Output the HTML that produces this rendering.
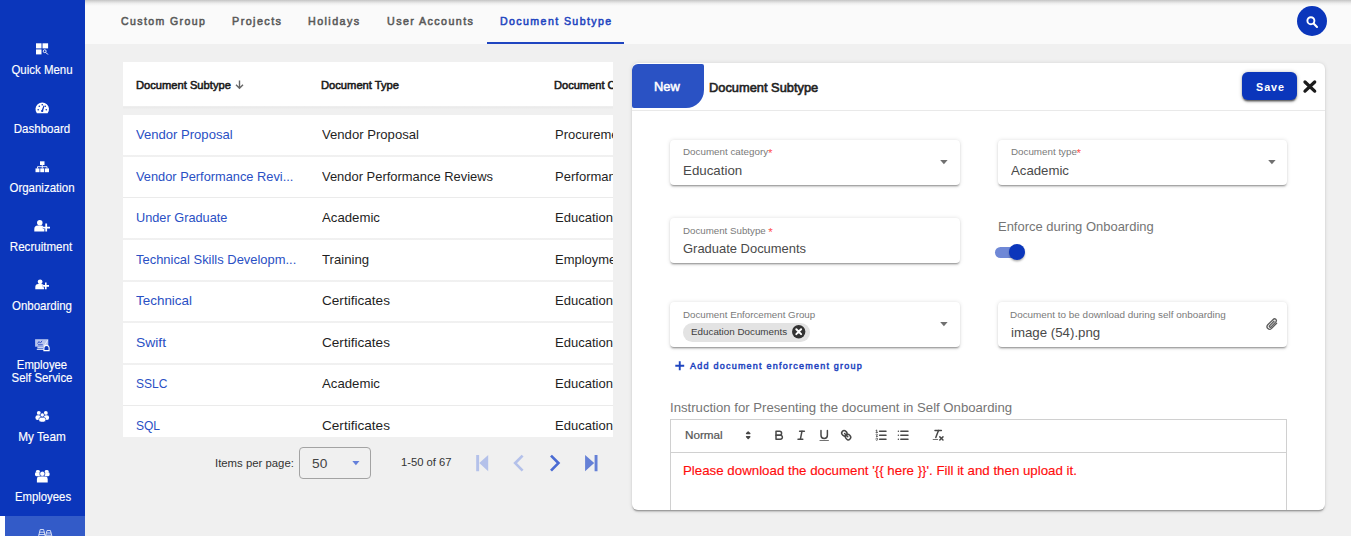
<!DOCTYPE html>
<html lang="en">
<head>
<meta charset="utf-8">
<title>Document Subtype</title>
<style>
*{box-sizing:border-box;margin:0;padding:0}
html,body{width:1351px;height:536px;overflow:hidden;background:#f0f0f0;font-family:"Liberation Sans",sans-serif;color:#222}
.abs{position:absolute}
.t{position:absolute;white-space:nowrap}
#side .t{-webkit-text-stroke:0.15px #fff}
#side{position:absolute;left:0;top:0;width:85px;height:536px;background:#0b36bb;color:#fff;z-index:5;overflow:hidden}
#side svg{position:absolute;overflow:visible}
.qs{fill:none;stroke:#484848;stroke-linecap:round;stroke-linejoin:round;stroke-width:1.850}
.qt{stroke-width:1}
.qf{fill:#444}
#active{position:absolute;left:5px;top:516px;width:80px;height:20px;background:#335bc8}
#activebar{position:absolute;left:0;top:516px;width:5px;height:20px;background:#fff}
#topnav{position:absolute;left:85px;top:0;width:1266px;height:44.4px;background:#fafafa;z-index:3}
#topshadow{position:absolute;left:85px;top:0;width:1266px;height:6px;background:linear-gradient(#c4c4c4,#dcdcdc 30%,#f0f0f0 62%,rgba(250,250,250,0));z-index:4}
#top{position:absolute;left:0;top:0;z-index:4}
#ink{position:absolute;left:486.5px;top:42px;width:137.5px;height:2.4px;background:#1f45c0;z-index:4}
#srch{position:absolute;left:1297px;top:6px;width:30px;height:30px;border-radius:50%;background:#0b36bb;z-index:4}
#tbl{position:absolute;left:123px;top:62.3px;width:490px;height:374.8px;overflow:hidden;background:#fff}
#hdr{position:absolute;left:0;top:0;width:490px;height:43.6px;background:#fff}
#gap{position:absolute;left:0;top:43.6px;width:490px;height:9px;background:linear-gradient(#f0f0f0,#ebebeb 1.2px,#ebebeb 2px,#f0f0f0 3px)}
.sep{position:absolute;left:0;width:490px;height:1.8px;background:linear-gradient(#f6f6f6,#ebebeb 50%,#f6f6f6)}
#pag{position:absolute;left:0;top:0}
#panel{position:absolute;left:632px;top:62.5px;width:693px;height:447.5px;background:#fff;border-radius:6px;box-shadow:0 2.4px .8px -1.6px rgba(0,0,0,.2),0 1.6px 1.6px rgba(0,0,0,.14),0 .8px 4px rgba(0,0,0,.1);overflow:hidden}
#pin{position:absolute;left:0;top:-0.5px;width:693px;height:449px}
#hline{position:absolute;left:0;top:48.3px;width:693px;height:1.2px;background:#e9e9e9}
#new{position:absolute;left:0;top:2px;width:71.5px;height:44px;background:#2a52c4;border-radius:6px 2px 18px 2px}
#save{position:absolute;left:610px;top:10px;width:55px;height:28px;background:#0b36bb;border-radius:6px;box-shadow:0 2.4px .8px -1.6px rgba(0,0,0,.3),0 1.800px 1.800px rgba(0,0,0,.34),0 .8px 4px rgba(0,0,0,.2)}
.fld{position:absolute;height:44.8px;width:290px;background:#fff;border-radius:4px;box-shadow:0 2.4px .8px -1.6px rgba(0,0,0,.2),0 1.6px 1.6px rgba(0,0,0,.14),0 .8px 4px rgba(0,0,0,.12)}

#chip{position:absolute;left:51.2px;top:261.2px;width:126.8px;height:18.5px;border-radius:9.25px;background:#e3e3e3}
#track{position:absolute;left:363px;top:185.4px;width:28px;height:10.8px;border-radius:6px;background:#6f88d6}
#thumb{position:absolute;left:377px;top:182px;width:16.2px;height:16.2px;border-radius:50%;background:#0b36bb;box-shadow:0 1.5px 2px rgba(0,0,0,.3)}
#ed{position:absolute;left:38.1px;top:357.3px;width:616.8px;height:120px;border:1.2px solid #d0d0d0}
#edline{position:absolute;left:38.2px;top:389.9px;width:616.6px;height:1.2px;background:#d0d0d0}
svg{position:absolute;overflow:visible}
.qs{fill:none;stroke:#484848;stroke-linecap:round;stroke-linejoin:round;stroke-width:1.850}
.qt{stroke-width:1}
.qf{fill:#444}
</style>
</head>
<body>
<div id="side">
<div class="t" style="font-size:12.7px;line-height:18px;top:61.00px;color:#fff;left:-58.10px;width:200px;text-align:center;transform:scaleX(0.9032);transform-origin:50% 50%;"><span id="s1">Quick Menu</span></div>
<div class="t" style="font-size:12.7px;line-height:18px;top:120.00px;color:#fff;left:-57.65px;width:200px;text-align:center;transform:scaleX(0.9090);transform-origin:50% 50%;"><span id="s2">Dashboard</span></div>
<div class="t" style="font-size:12.7px;line-height:18px;top:179.00px;color:#fff;left:-58.15px;width:200px;text-align:center;transform:scaleX(0.9041);transform-origin:50% 50%;"><span id="s3">Organization</span></div>
<div class="t" style="font-size:12.7px;line-height:18px;top:238.00px;color:#fff;left:-58.53px;width:200px;text-align:center;transform:scaleX(0.9119);transform-origin:50% 50%;"><span id="s4">Recruitment</span></div>
<div class="t" style="font-size:12.7px;line-height:18px;top:297.00px;color:#fff;left:-57.95px;width:200px;text-align:center;transform:scaleX(0.9049);transform-origin:50% 50%;"><span id="s5">Onboarding</span></div>
<div class="t" style="font-size:12.7px;line-height:18px;top:356.00px;color:#fff;left:-57.60px;width:200px;text-align:center;transform:scaleX(0.8918);transform-origin:50% 50%;"><span id="s6">Employee</span></div>
<div class="t" style="font-size:12.7px;line-height:18px;top:369.00px;color:#fff;left:-58.07px;width:200px;text-align:center;transform:scaleX(0.8996);transform-origin:50% 50%;"><span id="s7">Self Service</span></div>
<div class="t" style="font-size:12.7px;line-height:18px;top:428.00px;color:#fff;left:-57.85px;width:200px;text-align:center;transform:scaleX(0.9270);transform-origin:50% 50%;"><span id="s8">My Team</span></div>
<div class="t" style="font-size:12.7px;line-height:18px;top:488.00px;color:#fff;left:-57.50px;width:200px;text-align:center;transform:scaleX(0.8955);transform-origin:50% 50%;"><span id="s9">Employees</span></div>
<svg style="left:0;top:0" width="85" height="536" viewBox="0 0 85 536" fill="#fff">
<!-- quick menu -->
<rect x="36" y="43.3" width="5.5" height="5.1"/><rect x="42.5" y="43.3" width="5.6" height="5.1"/><rect x="36" y="49.4" width="5.5" height="5"/>
<circle cx="44.7" cy="51.2" r="1.45" fill="none" stroke="#fff" stroke-width="0.9"/><path d="M45.8 52.4 L47.9 54.5" stroke="#fff" stroke-width="1" fill="none"/>
<!-- dashboard -->
<path d="M36.9 113.3 A6.75 6.75 0 1 1 47.6 113.3 Z"/>
<g fill="#0b36bb"><circle cx="38.2" cy="109.8" r="0.8"/><circle cx="39.3" cy="106.3" r="0.8"/><circle cx="42.25" cy="104.8" r="0.8"/><circle cx="45.3" cy="106.3" r="0.8"/><circle cx="46.3" cy="109.8" r="0.8"/><path d="M41.3 111.2 L43.6 105.6 L44.5 106 L42.9 111.6 Z"/><circle cx="42.2" cy="111" r="1.1"/></g>
<!-- organization -->
<rect x="40" y="161.3" width="4.5" height="3.7"/><rect x="35.5" y="168.4" width="4" height="3.8"/><rect x="40.25" y="168.4" width="4" height="3.8"/><rect x="45" y="168.4" width="4" height="3.8"/>
<path d="M42.25 165V168.4 M37.5 168.6V166.7H47V168.6" stroke="#fff" stroke-width="0.9" fill="none"/>
<!-- recruitment user-plus -->
<circle cx="39.8" cy="222.8" r="2.75"/><path d="M34.3 231.4v-2.500a3.500 3.500 0 0 1 3.500-3.500h3.200a3.500 3.500 0 0 1 3.500 3.500v2.500z"/><path d="M46.200 223.600v7.800M42.900 227.600h7.100" stroke="#0b36bb" stroke-width="2.800" fill="none"/><path d="M46.200 223.600v7.800M42.900 227.600h7.100" stroke="#fff" stroke-width="1.800" fill="none"/>
<!-- onboarding user-plus small -->
<circle cx="40.100" cy="281.800" r="2.400"/><path d="M35.300 289.300v-2.200a3 3 0 0 1 3-3h2.900a3 3 0 0 1 3 3v2.200z"/><path d="M45.800 282.500v6.800M42.800 285.900h6.200" stroke="#0b36bb" stroke-width="2.500" fill="none"/><path d="M45.800 282.500v6.800M42.800 285.900h6.200" stroke="#fff" stroke-width="1.600" fill="none"/>
<!-- employee self service -->
<path d="M35.100 339.200h13.200v7.500H35.100z" fill="#b7c4ee"/><path d="M37.400 346.700h6v1.600h-6zM36.800 348.700h7v1.300h-7z" fill="#c9d3f3"/>
<path d="M37.600 343.500l1.400-2 1.400 1.600 1.600-2.300M38 344.800h4.800" stroke="#3050c8" stroke-width="1" fill="none"/>
<path d="M43.900 350.600v-2.600a2.600 2.600 0 0 1 5.200 0v2.600z" fill="#0b36bb" stroke="#fff" stroke-width="1.100"/>
<path d="M44.600 345.200l3-5" stroke="#e6ebfa" stroke-width="1" fill="none"/>
<!-- my team -->
<circle cx="38.800" cy="412.900" r="1.950"/><circle cx="45.800" cy="412.900" r="1.950"/>
<rect x="35.400" y="415.300" width="5.600" height="4.700" rx="2.300"/><rect x="43.600" y="415.300" width="5.500" height="4.700" rx="2.300"/>
<circle cx="42.300" cy="415" r="2.100" stroke="#0b36bb" stroke-width="0.600"/>
<rect x="38.700" y="417.300" width="7.200" height="4.800" rx="2.400" stroke="#0b36bb" stroke-width="0.600"/>
<!-- employees -->
<ellipse cx="37.900" cy="471.400" rx="2" ry="1.300"/><ellipse cx="46.700" cy="471.400" rx="2" ry="1.300"/>
<rect x="35" y="472.300" width="5.400" height="3.900" rx="1.400"/><rect x="44.200" y="472.300" width="5.400" height="3.900" rx="1.400"/>
<circle cx="42.300" cy="473.800" r="2.600" stroke="#0b36bb" stroke-width="0.700"/>
<path d="M36.900 482.400v-3.400a2.400 2.400 0 0 1 2.400-2.400h6a2.400 2.400 0 0 1 2.400 2.400v3.400z"/>
</svg>

<div id="active"></div><div id="activebar"></div>
<svg style="left:0;top:0" width="85" height="536" viewBox="0 0 85 536"><path d="M40.200 529.500h3.400l1.700 7h-6.800zM47 530.500h3.400l1.600 6h-6.600z M39.300 532.200h5.200M38.800 534.600h6.200M46.200 533h5M45.800 535.200h5.800" fill="none" stroke="#e4e9f8" stroke-width="0.900"/></svg>
</div>
<div id="topnav"></div>
<div id="topshadow"></div>
<div id="top">
<div class="t" id="t1" style="font-size:11.4px;line-height:16px;top:13.00px;color:#595959;letter-spacing:1.5px;-webkit-text-stroke:0.55px #595959;left:121.10px;transform:scaleX(0.9247);transform-origin:0 50%;">Custom Group</div>
<div class="t" id="t2" style="font-size:11.4px;line-height:16px;top:13.00px;color:#595959;letter-spacing:1.5px;-webkit-text-stroke:0.55px #595959;left:232.17px;transform:scaleX(0.9492);transform-origin:0 50%;">Projects</div>
<div class="t" id="t3" style="font-size:11.4px;line-height:16px;top:13.00px;color:#595959;letter-spacing:1.5px;-webkit-text-stroke:0.55px #595959;left:308.17px;transform:scaleX(0.9422);transform-origin:0 50%;">Holidays</div>
<div class="t" id="t4" style="font-size:11.4px;line-height:16px;top:13.00px;color:#595959;letter-spacing:1.5px;-webkit-text-stroke:0.55px #595959;left:386.51px;transform:scaleX(0.9393);transform-origin:0 50%;">User Accounts</div>
<div class="t" id="t5" style="font-size:11.4px;line-height:16px;top:13.00px;color:#1f45c0;letter-spacing:1.5px;-webkit-text-stroke:0.55px #1f45c0;left:499.79px;transform:scaleX(0.9317);transform-origin:0 50%;">Document Subtype</div>
</div>
<div id="ink"></div>
<div id="srch"><svg width="30" height="30" viewBox="0 0 30 30"><circle cx="13.900" cy="14.700" r="3.500" fill="none" stroke="#fff" stroke-width="1.900"/><path d="M16.600 17.500 L20 20.900" stroke="#fff" stroke-width="2.100" stroke-linecap="round"/></svg></div>

<div id="tbl">
  <div class="sep" style="top:92.7px"></div>
  <div class="sep" style="top:134.3px"></div>
  <div class="sep" style="top:175.9px"></div>
  <div class="sep" style="top:217.5px"></div>
  <div class="sep" style="top:259.1px"></div>
  <div class="sep" style="top:300.7px"></div>
  <div class="sep" style="top:342.3px"></div>
  <div id="hdr"></div><div id="gap"></div>
  <svg style="left:112px;top:18.2px" width="9" height="9" viewBox="0 0 9 9"><path d="M4.5 0.4V8 M1 4.7 L4.5 8.2 L8 4.7" fill="none" stroke="#666" stroke-width="1.400"/></svg>
<div class="t" id="h1" style="font-size:11.3px;line-height:16px;top:14.70px;color:#1a1a1a;-webkit-text-stroke:0.55px #1a1a1a;left:13.10px;transform:scaleX(0.9873);transform-origin:0 50%;">Document Subtype</div>
<div class="t" id="h2" style="font-size:11.3px;line-height:16px;top:14.70px;color:#1a1a1a;-webkit-text-stroke:0.55px #1a1a1a;left:198.22px;transform:scaleX(0.9891);transform-origin:0 50%;">Document Type</div>
<div class="t" id="h3" style="font-size:11.3px;line-height:16px;top:14.70px;color:#1a1a1a;-webkit-text-stroke:0.55px #1a1a1a;left:431.24px;transform:scaleX(0.9803);transform-origin:0 50%;">Document Category</div>
<div class="t" id="r0a" style="font-size:13px;line-height:19px;top:62.70px;color:#2a50c4;left:12.90px;transform:scaleX(1.0049);transform-origin:0 50%;">Vendor Proposal</div>
<div class="t" id="r0b" style="font-size:13px;line-height:19px;top:62.70px;color:#1f1f1f;left:198.80px;transform:scaleX(1.0086);transform-origin:0 50%;">Vendor Proposal</div>
<div class="t" id="r0c" style="font-size:13px;line-height:19px;top:62.70px;color:#1f1f1f;left:432.30px;transform:scaleX(0.9997);transform-origin:0 50%;">Procurement</div>
<div class="t" id="r1a" style="font-size:13px;line-height:19px;top:104.70px;color:#2a50c4;left:12.90px;transform:scaleX(0.9852);transform-origin:0 50%;">Vendor Performance Revi...</div>
<div class="t" id="r1b" style="font-size:13px;line-height:19px;top:104.70px;color:#1f1f1f;left:198.80px;transform:scaleX(0.9948);transform-origin:0 50%;">Vendor Performance Reviews</div>
<div class="t" id="r1c" style="font-size:13px;line-height:19px;top:104.70px;color:#1f1f1f;left:432.30px;transform:scaleX(1.0024);transform-origin:0 50%;">Performance</div>
<div class="t" id="r2a" style="font-size:13px;line-height:19px;top:145.70px;color:#2a50c4;left:12.90px;transform:scaleX(0.9799);transform-origin:0 50%;">Under Graduate</div>
<div class="t" id="r2b" style="font-size:13px;line-height:19px;top:145.70px;color:#1f1f1f;left:198.80px;transform:scaleX(1.0148);transform-origin:0 50%;">Academic</div>
<div class="t" id="r2c" style="font-size:13px;line-height:19px;top:145.70px;color:#1f1f1f;left:432.30px;transform:scaleX(1.0022);transform-origin:0 50%;">Education</div>
<div class="t" id="r3a" style="font-size:13px;line-height:19px;top:187.70px;color:#2a50c4;left:12.90px;transform:scaleX(0.9949);transform-origin:0 50%;">Technical Skills Developm...</div>
<div class="t" id="r3b" style="font-size:13px;line-height:19px;top:187.70px;color:#1f1f1f;left:198.80px;transform:scaleX(1.0113);transform-origin:0 50%;">Training</div>
<div class="t" id="r3c" style="font-size:13px;line-height:19px;top:187.70px;color:#1f1f1f;left:432.30px;transform:scaleX(0.9965);transform-origin:0 50%;">Employment</div>
<div class="t" id="r4a" style="font-size:13px;line-height:19px;top:228.70px;color:#2a50c4;left:12.90px;transform:scaleX(1.0334);transform-origin:0 50%;">Technical</div>
<div class="t" id="r4b" style="font-size:13px;line-height:19px;top:228.70px;color:#1f1f1f;left:198.80px;transform:scaleX(1.0447);transform-origin:0 50%;">Certificates</div>
<div class="t" id="r4c" style="font-size:13px;line-height:19px;top:228.70px;color:#1f1f1f;left:432.30px;transform:scaleX(1.0022);transform-origin:0 50%;">Education</div>
<div class="t" id="r5a" style="font-size:13px;line-height:19px;top:270.70px;color:#2a50c4;left:12.90px;transform:scaleX(1.0670);transform-origin:0 50%;">Swift</div>
<div class="t" id="r5b" style="font-size:13px;line-height:19px;top:270.70px;color:#1f1f1f;left:198.80px;transform:scaleX(1.0447);transform-origin:0 50%;">Certificates</div>
<div class="t" id="r5c" style="font-size:13px;line-height:19px;top:270.70px;color:#1f1f1f;left:432.30px;transform:scaleX(1.0022);transform-origin:0 50%;">Education</div>
<div class="t" id="r6a" style="font-size:13px;line-height:19px;top:311.70px;color:#2a50c4;left:12.90px;transform:scaleX(0.9236);transform-origin:0 50%;">SSLC</div>
<div class="t" id="r6b" style="font-size:13px;line-height:19px;top:311.70px;color:#1f1f1f;left:198.80px;transform:scaleX(1.0148);transform-origin:0 50%;">Academic</div>
<div class="t" id="r6c" style="font-size:13px;line-height:19px;top:311.70px;color:#1f1f1f;left:432.30px;transform:scaleX(1.0022);transform-origin:0 50%;">Education</div>
<div class="t" id="r7a" style="font-size:13px;line-height:19px;top:353.70px;color:#2a50c4;left:12.90px;transform:scaleX(0.9243);transform-origin:0 50%;">SQL</div>
<div class="t" id="r7b" style="font-size:13px;line-height:19px;top:353.70px;color:#1f1f1f;left:198.80px;transform:scaleX(1.0447);transform-origin:0 50%;">Certificates</div>
<div class="t" id="r7c" style="font-size:13px;line-height:19px;top:353.70px;color:#1f1f1f;left:432.30px;transform:scaleX(1.0022);transform-origin:0 50%;">Education</div>
</div>
<div id="pag">
<div class="t" id="g1" style="font-size:11.5px;line-height:16px;top:455.00px;color:#333;left:214.69px;transform:scaleX(0.9868);transform-origin:0 50%;">Items per page:</div>
<div class="t" id="g2" style="font-size:13px;line-height:19px;top:454.00px;color:#444;left:311.56px;transform:scaleX(1.0558);transform-origin:0 50%;">50</div>
<div class="t" id="g3" style="font-size:11.5px;line-height:16px;top:454.00px;color:#333;left:400.58px;transform:scaleX(0.9769);transform-origin:0 50%;">1-50 of 67</div>
  <div class="abs" style="left:299.3px;top:447.1px;width:71.4px;height:31.8px;border:1px solid #a3a3a3;border-radius:4px"></div>
  <svg style="left:351.6px;top:461.2px" width="8" height="5" viewBox="0 0 8 5"><path d="M0.300 0h7.200L3.900 4.200z" fill="#6480da"/></svg>
  <svg style="left:470px;top:451px" width="135" height="24" viewBox="0 0 135 24">
    <path d="M6.200 4h2.900v16.200H6.200z M18.200 4 L18.200 20.200 L9.300 12.100z" fill="#b4c1ea"/>
    <path d="M52.6 4.6 L45.2 12.1 L52.6 19.6" fill="none" stroke="#b4c1ea" stroke-width="2.700"/>
    <path d="M81 4.6 L88.4 12.1 L81 19.6" fill="none" stroke="#4a6bd3" stroke-width="2.700"/>
    <path d="M124.600 4h2.900v16.200h-2.900z M115.100 4 L115.100 20.200 L124.200 12.100z" fill="#6580d6"/>
  </svg>
</div>

<div id="panel"><div id="pin">
  <div id="new"></div>
  <div id="hline"></div>
  <div id="save"></div>
  <svg style="left:670.9px;top:17.8px" width="13.7" height="13.1" viewBox="0 0 13.7 13.1"><path d="M2 2 L11.700 11.100 M11.700 2 L2 11.100" stroke="#1c1c1c" stroke-width="3.300" stroke-linecap="round"/></svg>
  <div class="fld" style="left:38px;top:77.8px"><svg style="left:270.4px;top:20.4px" width="8" height="5" viewBox="0 0 8 5"><path d="M0.200 0h7.400L3.900 4.300z" fill="#707070"/></svg></div>
  <div class="fld" style="left:366px;top:77.8px;width:289.3px"><svg style="left:269.9px;top:20.4px" width="8" height="5" viewBox="0 0 8 5"><path d="M0.200 0h7.400L3.900 4.300z" fill="#707070"/></svg></div>
  <div class="fld" style="left:38px;top:156.2px"></div>
  <div class="fld" style="left:38px;top:240.1px"><svg style="left:270.4px;top:20.4px" width="8" height="5" viewBox="0 0 8 5"><path d="M0.200 0h7.400L3.900 4.300z" fill="#707070"/></svg></div>
  <div class="fld" style="left:366px;top:240.1px;width:289.3px"></div>
  <div id="chip"></div>
  <svg style="left:159.8px;top:262.9px" width="13.4" height="13.4" viewBox="0 0 13.4 13.4"><circle cx="6.7" cy="6.7" r="6.7" fill="#333"/><path d="M4.3 4.3 L9.1 9.1 M9.1 4.3 L4.3 9.1" stroke="#fff" stroke-width="2" stroke-linecap="round"/></svg>
  <svg style="left:42.8px;top:299.2px" width="9.5" height="9.5" viewBox="0 0 9.5 9.5"><path d="M4.75 0.3V9.2 M0.3 4.75H9.2" stroke="#1f45c0" stroke-width="1.9"/></svg>
  <div id="track"></div><div id="thumb"></div>
  <svg style="left:634px;top:256px" width="12" height="13" viewBox="0 0 12 13"><path d="M10.6 5.2 L5.6 10.4 a2.6 2.6 0 0 1 -3.8 -3.6 L7.2 1.4 a1.8 1.8 0 0 1 2.6 2.5 L4.8 9.1 a0.9 0.9 0 0 1 -1.3 -1.2 L8 3.2" fill="none" stroke="#5e5e5e" stroke-width="1.350" stroke-linecap="round"/></svg>
  <div id="ed"></div><div id="edline"></div>
  <svg class="ql" style="left:109.4px;top:366.1px" width="14.4" height="14.4" viewBox="0 0 18 18"><polygon class="qs" points="7 11 9 13 11 11 7 11"/><polygon class="qs" points="7 7 9 5 11 7 7 7"/></svg>
<svg class="ql" style="left:139.8px;top:366.1px" width="14.4" height="14.4" viewBox="0 0 18 18"><path class="qs" d="M5,4H9.5A2.5,2.5,0,0,1,12,6.5v0A2.5,2.5,0,0,1,9.5,9H5V4Z"/><path class="qs" d="M5,9h5.500A2.5,2.5,0,0,1,13,11.5v0A2.5,2.5,0,0,1,10.5,14H5V9Z"/></svg>
<svg class="ql" style="left:162.2px;top:366.1px" width="14.4" height="14.4" viewBox="0 0 18 18"><line class="qs" x1="7" x2="13" y1="4" y2="4"/><line class="qs" x1="5" x2="11" y1="14" y2="14"/><line class="qs" x1="8" x2="10" y1="14" y2="4"/></svg>
<svg class="ql" style="left:184.6px;top:366.1px" width="14.4" height="14.4" viewBox="0 0 18 18"><path class="qs" d="M5,3V9a4.012,4.012,0,0,0,4,4H9a4.012,4.012,0,0,0,4-4V3"/><rect class="qf" height="1" rx="0.5" ry="0.5" width="12" x="3" y="15"/></svg>
<svg class="ql" style="left:207px;top:366.1px" width="14.4" height="14.4" viewBox="0 0 18 18"><line class="qs" x1="7" x2="11" y1="7" y2="11"/><path class="qs" d="M8.9,4.577a3.476,3.476,0,0,1,.36,4.679A3.476,3.476,0,0,1,4.577,8.9C3.185,7.5,2.035,6.4,4.217,4.217S7.5,3.185,8.9,4.577Z"/><path class="qs" d="M13.423,9.1a3.476,3.476,0,0,0-4.679-.36,3.476,3.476,0,0,0,.36,4.679c1.392,1.392,2.5,2.542,4.679.36S14.815,10.5,13.423,9.1Z"/></svg>
<svg class="ql" style="left:241.8px;top:366.1px" width="14.4" height="14.4" viewBox="0 0 18 18"><line class="qs" x1="7" x2="15" y1="4" y2="4"/><line class="qs" x1="7" x2="15" y1="9" y2="9"/><line class="qs" x1="7" x2="15" y1="14" y2="14"/><line class="qs qt" x1="2.5" x2="4.5" y1="5.5" y2="5.5"/><path class="qf" d="M3.5,6A0.5,0.5,0,0,1,3,5.5V3.085l-0.276.138A0.5,0.5,0,0,1,2.053,3c-0.124-.247-0.023-0.324.224-0.447l1-.5A0.5,0.5,0,0,1,4,2.500v3A0.5,0.5,0,0,1,3.5,6Z"/><path class="qs qt" d="M4.5,10.5h-2c0-.234,1.85-1.076,1.85-2.234A0.959,0.959,0,0,0,2.5,8.156"/><path class="qs qt" d="M2.5,14.846a0.959,0.959,0,0,0,1.85-.109A0.7,0.7,0,0,0,3.750,14a0.688,0.688,0,0,0,.6-0.736,0.959,0.959,0,0,0-1.85-.109"/></svg>
<svg class="ql" style="left:264.2px;top:366.1px" width="14.4" height="14.4" viewBox="0 0 18 18"><line class="qs" x1="6" x2="15" y1="4" y2="4"/><line class="qs" x1="6" x2="15" y1="9" y2="9"/><line class="qs" x1="6" x2="15" y1="14" y2="14"/><line class="qs" x1="3" x2="3" y1="4" y2="4"/><line class="qs" x1="3" x2="3" y1="9" y2="9"/><line class="qs" x1="3" x2="3" y1="14" y2="14"/></svg>
<svg class="ql" style="left:298.6px;top:366.1px" width="14.4" height="14.4" viewBox="0 0 18 18"><line class="qs" x1="5" x2="13" y1="3" y2="3"/><line class="qs" x1="6" x2="9.35" y1="12" y2="3"/><line class="qs" x1="11" x2="15" y1="11" y2="15"/><line class="qs" x1="15" x2="11" y1="11" y2="15"/><rect class="qf" height="1" rx="0.5" ry="0.5" width="7" x="2" y="14"/></svg>

<div class="t" id="p1" style="font-size:13px;line-height:19px;top:15.00px;color:#fff;-webkit-text-stroke:0.5px #fff;left:22.45px;transform:scaleX(0.9933);transform-origin:0 50%;">New</div>
<div class="t" id="p2" style="font-size:13px;line-height:19px;top:16.00px;color:#222;-webkit-text-stroke:0.6px #222;left:77.21px;transform:scaleX(0.9879);transform-origin:0 50%;">Document Subtype</div>
<div class="t" id="p3" style="font-size:11.5px;line-height:16px;top:17.00px;color:#fff;font-weight:bold;letter-spacing:1px;left:623.67px;transform:scaleX(0.9396);transform-origin:0 50%;">Save</div>
<div class="t" id="f1l" style="font-size:9.6px;line-height:15px;top:82.00px;color:#7a7a7a;left:51.10px;transform:scaleX(1.0227);transform-origin:0 50%;">Document category</div>
<div class="t" id="f1a" style="font-size:11.5px;line-height:16px;top:83.00px;color:#ff5252;left:136.00px;">*</div>
<div class="t" id="f1v" style="font-size:13px;line-height:19px;top:99.00px;color:#4a4a4a;left:50.52px;transform:scaleX(1.0245);transform-origin:0 50%;">Education</div>
<div class="t" id="f2l" style="font-size:9.6px;line-height:15px;top:82.00px;color:#7a7a7a;left:379.12px;transform:scaleX(1.0213);transform-origin:0 50%;">Document type</div>
<div class="t" id="f2a" style="font-size:11.5px;line-height:16px;top:83.00px;color:#ff5252;left:444.60px;">*</div>
<div class="t" id="f2v" style="font-size:13px;line-height:19px;top:99.00px;color:#4a4a4a;left:378.83px;transform:scaleX(1.0153);transform-origin:0 50%;">Academic</div>
<div class="t" id="f3l" style="font-size:9.6px;line-height:15px;top:161.00px;color:#7a7a7a;left:51.13px;transform:scaleX(1.0136);transform-origin:0 50%;">Document Subtype</div>
<div class="t" id="f3a" style="font-size:11.5px;line-height:16px;top:162.00px;color:#ff5252;left:136.20px;">*</div>
<div class="t" id="f3v" style="font-size:13px;line-height:19px;top:177.00px;color:#4a4a4a;left:50.52px;transform:scaleX(0.9960);transform-origin:0 50%;">Graduate Documents</div>
<div class="t" id="f4l" style="font-size:9.6px;line-height:15px;top:245.00px;color:#7a7a7a;left:51.10px;transform:scaleX(1.0159);transform-origin:0 50%;">Document Enforcement Group</div>
<div class="t" id="f4c" style="font-size:9.6px;line-height:15px;top:262.00px;color:#404040;left:59.19px;transform:scaleX(1.0237);transform-origin:0 50%;">Education Documents</div>
<div class="t" id="f5l" style="font-size:9.6px;line-height:15px;top:245.00px;color:#7a7a7a;left:378.27px;transform:scaleX(1.0317);transform-origin:0 50%;">Document to be download during self onboarding</div>
<div class="t" id="f5v" style="font-size:13px;line-height:19px;top:261.00px;color:#4a4a4a;left:378.68px;transform:scaleX(1.0200);transform-origin:0 50%;">image (54).png</div>
<div class="t" id="en" style="font-size:13px;line-height:19px;top:155.00px;color:#757575;left:365.61px;transform:scaleX(0.9974);transform-origin:0 50%;">Enforce during Onboarding</div>
<div class="t" id="add" style="font-size:9.6px;line-height:15px;top:296.00px;color:#1f45c0;letter-spacing:1.3px;-webkit-text-stroke:0.5px #1f45c0;left:58.10px;transform:scaleX(0.9400);transform-origin:0 50%;">Add document enforcement group</div>
<div class="t" id="ins" style="font-size:13px;line-height:19px;top:336.00px;color:#757575;left:38.47px;transform:scaleX(1.0115);transform-origin:0 50%;">Instruction for Presenting the document in Self Onboarding</div>
<div class="t" id="nrm" style="font-size:10.4px;line-height:15px;top:366.00px;color:#555;-webkit-text-stroke:0.2px #555;left:53.02px;transform:scaleX(1.1250);transform-origin:0 50%;">Normal</div>
<div class="t" id="xred" style="font-size:13px;line-height:19px;top:399.00px;color:#ff0d0d;-webkit-text-stroke:0.15px #ff0d0d;left:50.83px;transform:scaleX(1.0229);transform-origin:0 50%;">Please download the document '{{ here }}'. Fill it and then upload it.</div>
</div></div>
</body>
</html>
